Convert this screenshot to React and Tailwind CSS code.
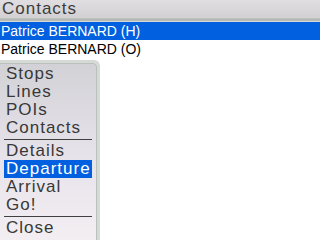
const menuTop = ['Stops', 'Lines', 'POIs', 'Contacts'];
const menuMid = ['Details', 'Departure', 'Arrival', 'Go!'];

const MenuItem = ({ label, active }) => (
  <div
    className={`h-[18px] leading-[18px] px-[2px] text-[17px] tracking-[1px] ${
      active ? 'bg-[#0060e0] text-white' : 'text-[#383838]'
    }`}
  >
    {label}
  </div>
);

export default function App() {
  return (
    <div
      className="relative w-[320px] h-[240px] overflow-hidden bg-white"
      style={{ fontFamily: '"Liberation Sans", Arial, sans-serif' }}
    >
      {/* title bar */}
      <div className="h-[18px] bg-gradient-to-b from-[#e0dee0] to-[#d2d0d2] text-[17px] tracking-[1px] leading-[18px] text-[#3c3c3c] px-[2px]">
        Contacts
      </div>
      <div className="h-[4px] bg-gradient-to-b from-[#c4c8c4] via-[#aab0aa] to-[#e4e6e4]" />

      {/* list */}
      <div className="h-[18px] bg-[#0060e0] text-white text-[14px] leading-[18px] px-[1px]">
        Patrice BERNARD (H)
      </div>
      <div className="h-[18px] text-black text-[14px] leading-[18px] px-[1px]">
        Patrice BERNARD (O)
      </div>

      {/* popup menu */}
      <div className="absolute left-0 top-[60px] w-[100px] h-[180px] border-t-[3px] border-r-[3px] border-[#d6dad6] rounded-tr-[6px] bg-[#f4f4f4]">
        <div className="h-full border-t border-r border-[#bcc0bc] rounded-tr-[4px] bg-gradient-to-b from-[#d2d2d6] via-[#e6e2ea] to-[#f2eef2] px-[4px] pt-[1px]">
          {menuTop.map((m) => (
            <MenuItem key={m} label={m} />
          ))}
          <div className="h-[1px] bg-[#404040] my-[2px]" />
          {menuMid.map((m) => (
            <MenuItem key={m} label={m} active={m === 'Departure'} />
          ))}
          <div className="h-[1px] bg-[#404040] my-[2px]" />
          <MenuItem label="Close" />
        </div>
      </div>
    </div>
  );
}
